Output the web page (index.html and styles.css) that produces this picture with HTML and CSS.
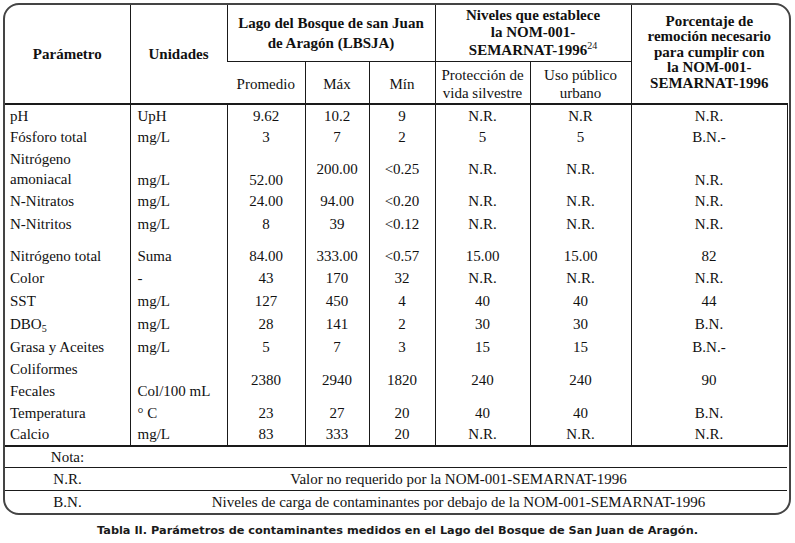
FILE: index.html
```html
<!DOCTYPE html>
<html lang="es">
<head>
<meta charset="utf-8">
<title>Tabla II</title>
<link rel="stylesheet" href="styles.css">
</head>
<body>
<div class="frame">
<table class="data">
  <colgroup>
    <col class="c1"><col class="c2"><col class="c3"><col class="c4"><col class="c5"><col class="c6"><col class="c7"><col class="c8">
  </colgroup>
  <thead>
    <tr class="h1">
      <th rowspan="2" class="hp">Parámetro</th>
      <th rowspan="2" class="hp">Unidades</th>
      <th colspan="3" class="hlago">Lago del Bosque de san Juan<br>de Aragón (LBSJA)</th>
      <th colspan="2" class="hniv">Niveles que establece<br>la NOM-001-<br>SEMARNAT-1996<sup>24</sup></th>
      <th rowspan="2" class="hpor">Porcentaje de<br>remoción necesario<br>para cumplir con<br>la NOM-001-<br>SEMARNAT-1996</th>
    </tr>
    <tr class="h2">
      <th class="sub">Promedio</th>
      <th class="sub">Máx</th>
      <th class="sub">Mín</th>
      <th class="sub two">Protección de<br>vida silvestre</th>
      <th class="sub two">Uso público<br>urbano</th>
    </tr>
  </thead>
  <tbody>
    <tr class="r22 first"><td>pH</td><td>UpH</td><td>9.62</td><td>10.2</td><td>9</td><td>N.R.</td><td>N.R</td><td>N.R.</td></tr>
    <tr class="r22"><td>Fósforo total</td><td>mg/L</td><td>3</td><td>7</td><td>2</td><td>5</td><td>5</td><td>B.N.-</td></tr>
    <tr class="r42"><td>Nitrógeno<br>amoniacal</td><td class="bot">mg/L</td><td class="bot">52.00</td><td>200.00</td><td>&lt;0.25</td><td>N.R.</td><td>N.R.</td><td class="bot">N.R.</td></tr>
    <tr class="r22"><td>N-Nitratos</td><td>mg/L</td><td>24.00</td><td>94.00</td><td>&lt;0.20</td><td>N.R.</td><td>N.R.</td><td>N.R.</td></tr>
    <tr class="r23"><td>N-Nitritos</td><td>mg/L</td><td>8</td><td>39</td><td>&lt;0.12</td><td>N.R.</td><td>N.R.</td><td>N.R.</td></tr>
    <tr class="r31"><td>Nitrógeno total</td><td>Suma</td><td>84.00</td><td>333.00</td><td>&lt;0.57</td><td>15.00</td><td>15.00</td><td>82</td></tr>
    <tr class="r23"><td>Color</td><td>-</td><td>43</td><td>170</td><td>32</td><td>N.R.</td><td>N.R.</td><td>N.R.</td></tr>
    <tr class="r23"><td>SST</td><td>mg/L</td><td>127</td><td>450</td><td>4</td><td>40</td><td>40</td><td>44</td></tr>
    <tr class="r23"><td>DBO<sub>5</sub></td><td>mg/L</td><td>28</td><td>141</td><td>2</td><td>30</td><td>30</td><td>B.N.</td></tr>
    <tr class="r23"><td>Grasa y Aceites</td><td>mg/L</td><td>5</td><td>7</td><td>3</td><td>15</td><td>15</td><td>B.N.-</td></tr>
    <tr class="r42 wide"><td>Coliformes<br>Fecales</td><td class="bot">Col/100 mL</td><td>2380</td><td>2940</td><td>1820</td><td>240</td><td>240</td><td>90</td></tr>
    <tr class="r21"><td>Temperatura</td><td>° C</td><td>23</td><td>27</td><td>20</td><td>40</td><td>40</td><td>B.N.</td></tr>
    <tr class="r23 last"><td>Calcio</td><td>mg/L</td><td>83</td><td>333</td><td>20</td><td>N.R.</td><td>N.R.</td><td>N.R.</td></tr>
  </tbody>
  <tfoot>
    <tr class="n20"><td class="nk">Nota:</td><td colspan="7" class="nv"></td></tr>
    <tr class="n23 sep"><td class="nk">N.R.</td><td colspan="7" class="nv">Valor no requerido por la NOM-001-SEMARNAT-1996</td></tr>
    <tr class="n22 sep"><td class="nk">B.N.</td><td colspan="7" class="nv">Niveles de carga de contaminantes por debajo de la NOM-001-SEMARNAT-1996</td></tr>
  </tfoot>
</table>
</div>
<p class="caption">Tabla II. Parámetros de contaminantes medidos en el Lago del Bosque de San Juan de Aragón.</p>
</body>
</html>
```

FILE: styles.css
```css
html, body {
  margin: 0;
  padding: 0;
  background: #ffffff;
}

body {
  font-family: "Liberation Serif", "Times New Roman", serif;
  color: #111;
}

.frame {
  margin: 3px 0 0 3px;
  width: 784px;
  border: 2px solid #444;
  border-radius: 16px;
  overflow: hidden;
  background: #fff;
}

.data {
  border-collapse: collapse;
  table-layout: fixed;
  width: 782px;
  font-family: "Liberation Serif", "Times New Roman", serif;
  font-size: 15px;
  line-height: 20px;
}

.c1 { width: 125px; }
.c2 { width: 97px; }
.c3 { width: 78px; }
.c4 { width: 64px; }
.c5 { width: 66px; }
.c6 { width: 95px; }
.c7 { width: 101px; }
.c8 { width: 156px; }

th, td {
  padding: 0;
  border-left: 1px solid #1a1a1a;
  text-align: center;
  vertical-align: middle;
}

th:first-child, td:first-child {
  border-left: none;
}

thead th {
  font-weight: bold;
  color: #111;
}

.h1 { height: 56px; }
.h2 { height: 43px; }

.h1 th { border-bottom: 1px solid #1a1a1a; }
.h1 th.hp, .h1 th.hpor { border-bottom: 2px solid #1a1a1a; }
.h2 th { border-bottom: 2px solid #1a1a1a; }

.hlago { line-height: 20px; }
.hniv { line-height: 17.5px; }
.hniv sup {
  font-size: 10px;
  line-height: 0;
  vertical-align: 6px;
  font-weight: normal;
}
.hpor {
  line-height: 15.5px;
  padding-bottom: 3px;
}

.sub {
  font-weight: normal !important;
  padding-top: 3px;
}
.sub.two { line-height: 18px; }

tbody td:first-child {
  text-align: left;
  padding-left: 5px;
}
tbody td:nth-child(2) {
  text-align: left;
  padding-left: 7px;
}
tbody td:last-child {
  border-right: 1px solid #1a1a1a;
}

.r21 { height: 21px; }
.r22 { height: 22px; }
.r23 { height: 23px; }
.r31 { height: 31px; }
.r42 { height: 42px; }
.r31 td { vertical-align: bottom; }
.r42.wide td { line-height: 22px; }

td.bot { vertical-align: bottom; }

sub {
  font-size: 10px;
  line-height: 0;
  vertical-align: -3px;
}

.last td { border-bottom: 2px solid #1a1a1a; }

tfoot td {
  border-left: none;
  border-right: none;
}
.nk { text-align: center; }
.nv { text-align: center; }
.n20 { height: 20px; }
.n22 { height: 22px; }
.n23 { height: 23px; }
tfoot .sep td { border-top: 1px solid #1a1a1a; }

.caption {
  margin: 8px 0 0 0;
  width: 795px;
  text-align: center;
  font-family: "DejaVu Sans", "Liberation Sans", sans-serif;
  font-weight: bold;
  font-size: 11.3px;
  color: #1a1a1a;
  line-height: 16px;
}
```
